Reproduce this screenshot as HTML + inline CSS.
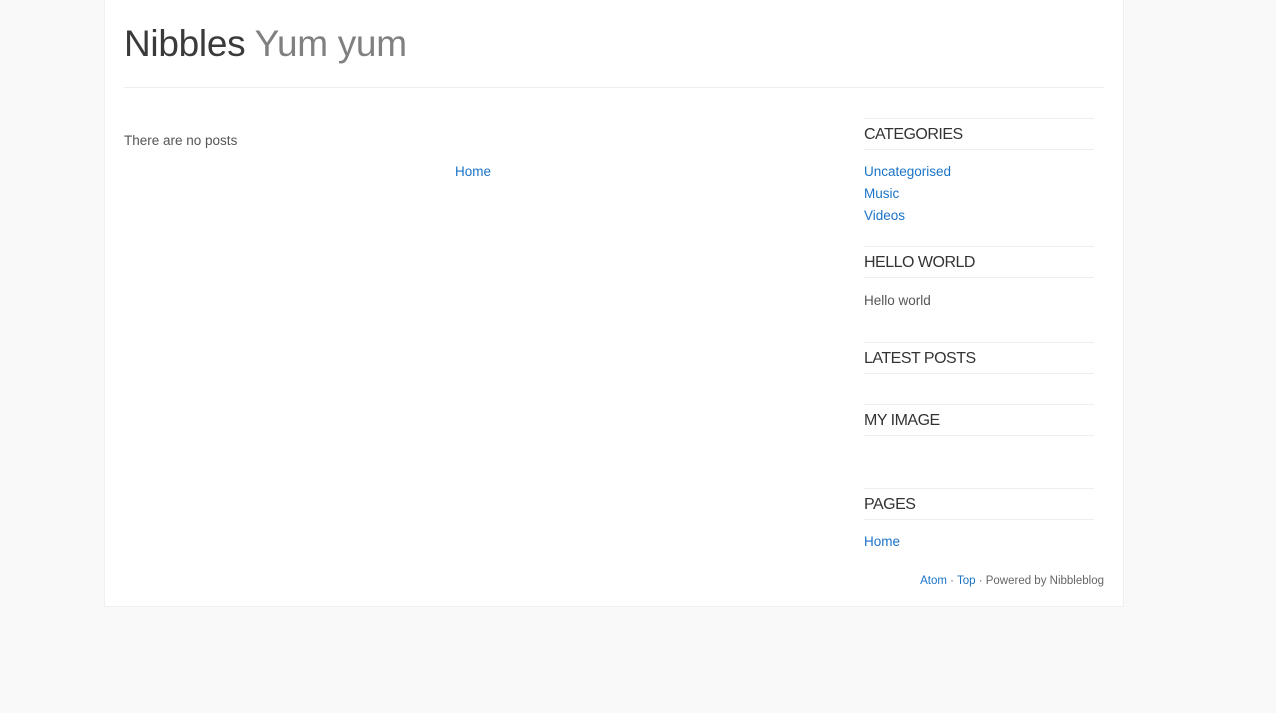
<!DOCTYPE html>
<html><head><style>
body{margin:0;background:#f9f9f9;font-family:"Liberation Sans",sans-serif;width:1276px;height:713px;overflow:hidden;position:relative}
.box{position:absolute;left:104px;top:0;width:1020px;height:607px;background:#fff;border:1px solid #f0f0f0;border-top:none;box-sizing:border-box}
.a{position:absolute;white-space:nowrap;line-height:22px;font-size:13.5px;color:#555}
a,.l{color:#1a73c8;text-decoration:none}
.h{position:absolute;left:864px;width:230px;height:30px;border-top:1px solid #eee;border-bottom:1px solid #eee;font-size:16px;color:#333;line-height:31px;letter-spacing:-0.5px}
.hr{position:absolute;left:124px;width:980px;top:87px;border-top:1px solid #eee}
</style></head><body>
<div class="box"></div>
<div class="a" style="left:124px;top:19px;font-size:37px;line-height:50px;color:#3a3a3a;letter-spacing:-0.3px">Nibbles <span style="color:#808080">Yum yum</span></div>
<div class="hr"></div>
<div class="a" style="left:124px;top:130px">There are no posts</div>
<div class="a l" style="left:455px;top:161px">Home</div>
<div class="h" style="top:118px">CATEGORIES</div>
<div class="a l" style="left:864px;top:161px">Uncategorised</div>
<div class="a l" style="left:864px;top:183px">Music</div>
<div class="a l" style="left:864px;top:205px">Videos</div>
<div class="h" style="top:246px">HELLO WORLD</div>
<div class="a" style="left:864px;top:290px">Hello world</div>
<div class="h" style="top:342px">LATEST POSTS</div>
<div class="h" style="top:404px">MY IMAGE</div>
<div class="h" style="top:488px">PAGES</div>
<div class="a l" style="left:864px;top:531px">Home</div>
<div class="a" style="right:172px;top:570px;font-size:11.5px;color:#666"><span class="l">Atom</span> · <span class="l">Top</span> · Powered by Nibbleblog</div>
</body></html>
